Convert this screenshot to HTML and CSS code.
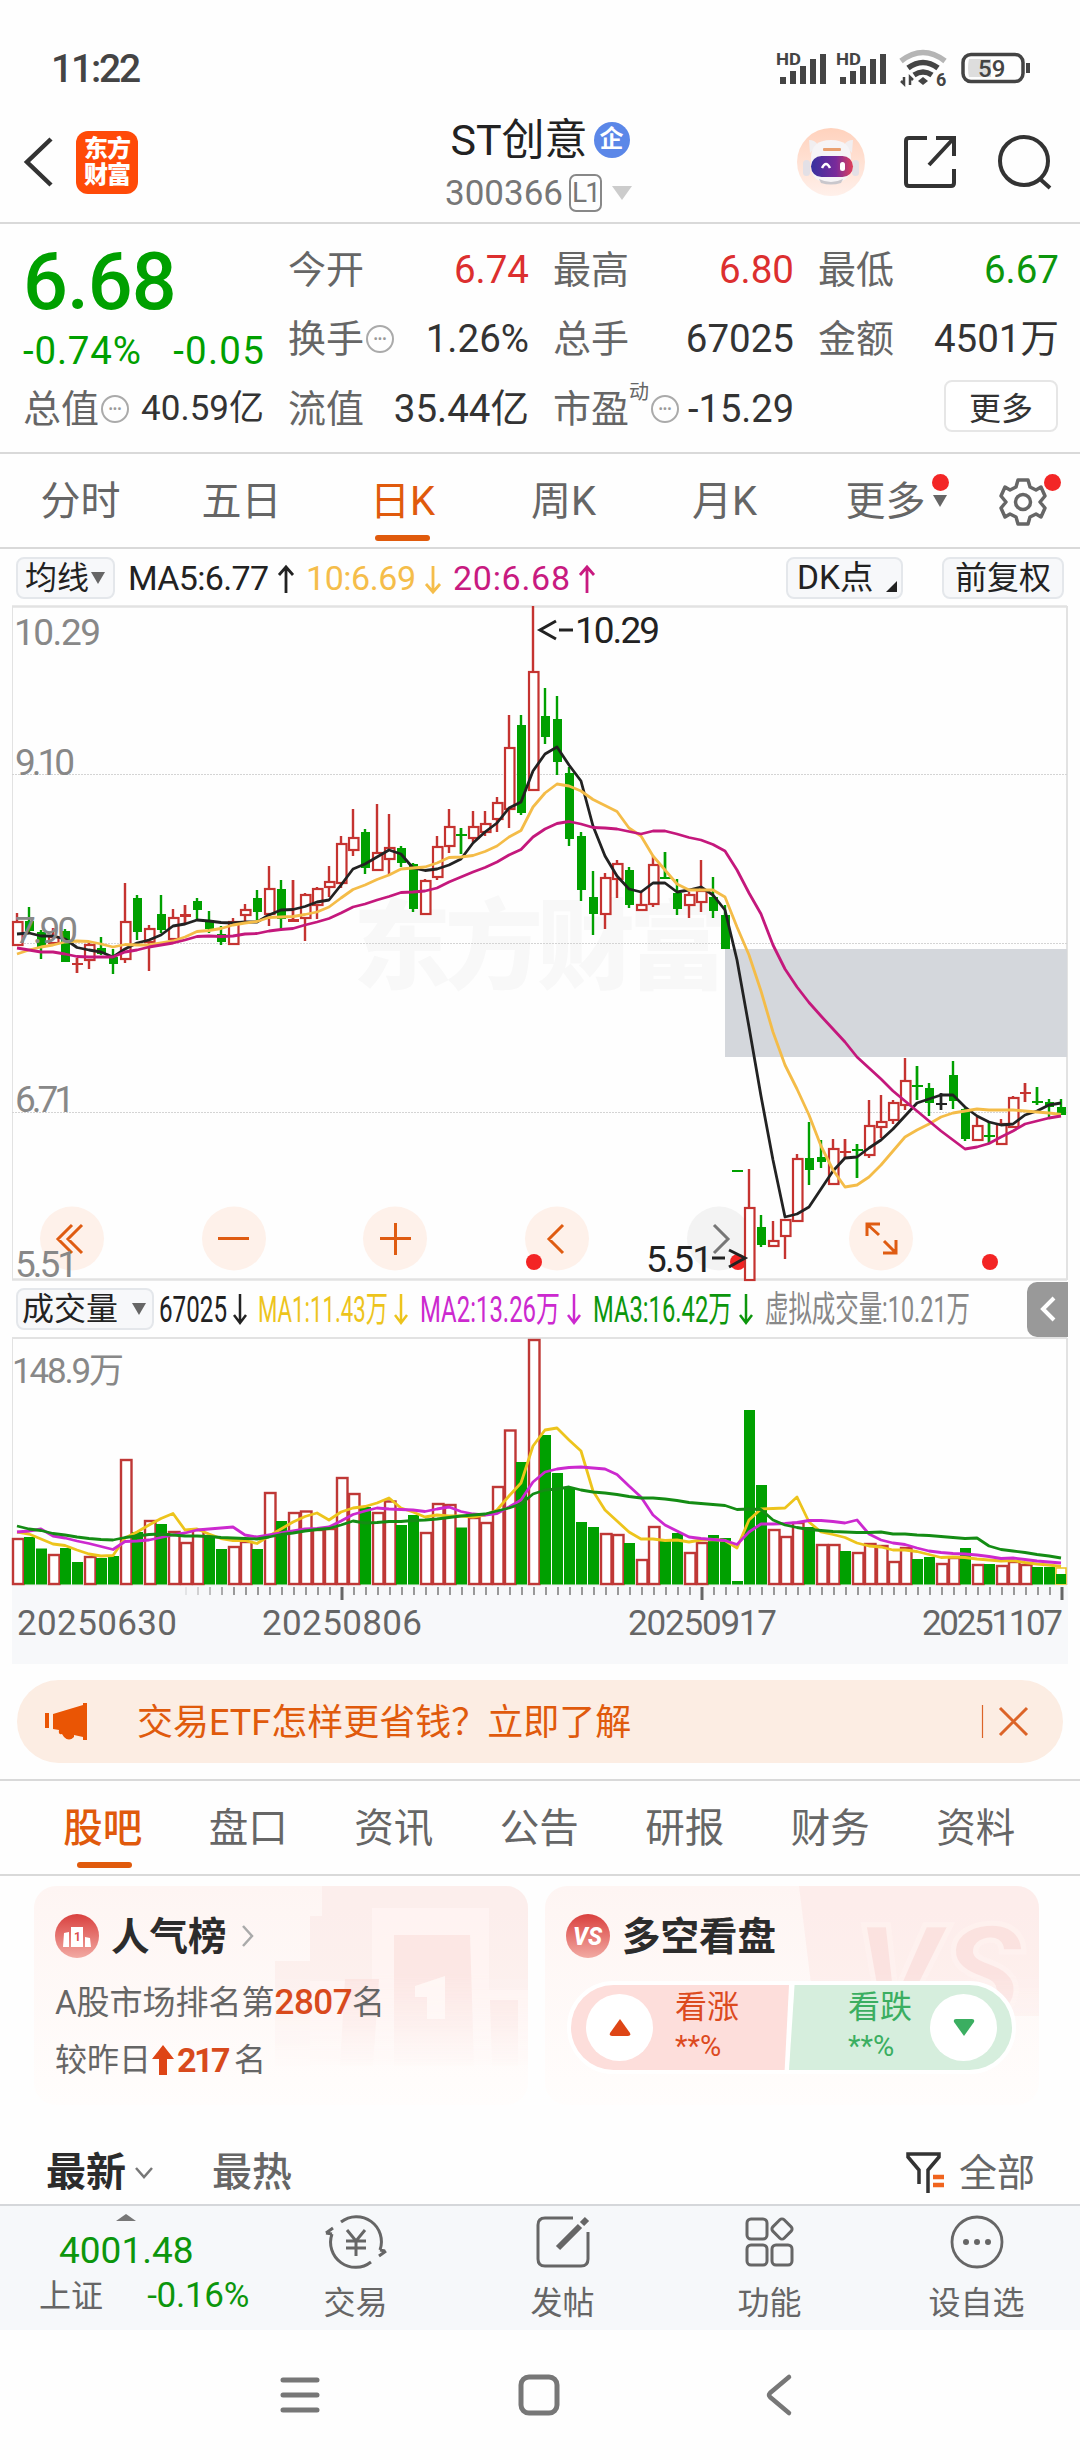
FILE: index.html
```html
<!DOCTYPE html>
<html lang="zh-CN">
<head>
    <meta charset="UTF-8">
    <meta name="viewport" content="width=device-width, initial-scale=1.0">
    <title>ST创意 300366</title>
    <link rel="stylesheet" href="styles.css">
</head>
<body>

    <div class="status-bar">
        <span class="time">11:22</span>
        <svg class="status-icons" width="256" height="44" viewBox="774 46 256 44">
            <g fill="#444">
                <text x="775" y="65" font-size="17" font-weight="700" textLength="25" lengthAdjust="spacingAndGlyphs">HD</text>
                <text x="835" y="65" font-size="17" font-weight="700" textLength="25" lengthAdjust="spacingAndGlyphs">HD</text>
                <path d="M779 77h6v7h-6zM789 71h6v13h-6zM799 66h6v18h-6zM809 59h6v25h-6zM819 54h6v30h-6z"/>
                <path d="M839 77h6v7h-6zM849 71h6v13h-6zM859 66h6v18h-6zM869 59h6v25h-6zM879 54h6v30h-6z"/>
                <text x="935" y="86" font-size="18" font-weight="700">6</text>
                <path d="M922 77l-5 4 5 4 5-4z"/>
            </g>
            <g fill="none" stroke="#444" stroke-width="5.500">
                <path d="M900 61Q922 44 944 61" stroke="#b5b5b5"/>
                <path d="M907 68Q922 57 937 68"/>
                <path d="M913 75Q922 69 931 75"/>
                <path d="M903 77v7l-3-3M909 85v-8l3 3" stroke-width="2.5"/>
                <rect x="962" y="54.500" width="60" height="27" rx="8" stroke-width="3.500"/>
                <path d="M1027 63v10" stroke-width="4"/>
            </g>
            <path d="M968 59h22v18h-22q-2-9 0-18" fill="#ddd"/>
            <text x="977" y="77" font-size="24" font-weight="500" fill="#444">59</text>
        </svg>
    </div>

    <div class="header">
        <div class="header-left">
            <svg width="30" height="50" viewBox="0 0 30 50"><path d="M27 2L3 25l24 23" fill="none" stroke="#333" stroke-width="4.500"/></svg>
            <div class="logo"><span>东方</span><span>财富</span></div>
        </div>
        <div class="header-title">
            <div class="name">ST创意<span class="badge">企</span></div>
            <div class="code">300366<span class="level">L1</span><i class="arrow-down"></i></div>
        </div>
        <div class="header-right">
            <svg class="robot" width="68" height="68" viewBox="0 0 68 68">
                <defs>
                    <linearGradient id="peach" x1="0" y1="0" x2="0" y2="1"><stop offset="0" stop-color="#ffd2bd"/><stop offset="1" stop-color="#fff0ea"/></linearGradient>
                    <linearGradient id="visor"><stop offset="0" stop-color="#38319f"/><stop offset=".6" stop-color="#7a2a9a"/><stop offset="1" stop-color="#e0405a"/></linearGradient>
                </defs>
                <circle cx="34" cy="34" r="34" fill="url(#peach)"/>
                <path d="M12 12q6 0 9 5l-8 8zM56 12q-6 0-9 5l8 8z" fill="#f1eef0"/>
                <path d="M14 30Q14 12 34 12t20 18v8q0 17-20 17T14 38z" fill="#f6f4f6"/>
                <rect x="6" y="32" width="7" height="16" rx="3.500" fill="#e3e0e6"/>
                <rect x="55" y="32" width="7" height="16" rx="3.500" fill="#e3e0e6"/>
                <path d="M22 51q12 6 24 0l-2 4q-10 3-20 0z" fill="#c9c7cc"/>
                <rect x="26" y="20" width="18" height="3" rx="1" fill="#e9a070"/>
                <rect x="14" y="28" width="42" height="21" rx="10.500" fill="url(#visor)"/>
                <path d="M25 40q4-8 8 0" fill="none" stroke="#fff" stroke-width="2.500"/>
                <rect x="43" y="34" width="5" height="9" rx="2.500" fill="#fff"/>
            </svg>
            <svg width="54" height="54" viewBox="0 0 54 54" fill="none" stroke="#333" stroke-width="4"><path d="M24 3H6q-3 0-3 3v42q0 3 3 3h42q3 0 3-3V34M33 3h18v18M51 3L26 30"/></svg>
            <svg width="56" height="56" viewBox="0 0 56 56" fill="none" stroke="#333" stroke-width="4"><circle cx="27" cy="27" r="24"/><path d="M43 45l10 9"/></svg>
        </div>
    </div>

    <div class="quote">
        <div class="price-box">
            <div class="price">6.68</div>
            <div class="change"><span>-0.74%</span><span>-0.05</span></div>
        </div>
        <div class="cell"><label>今开</label><b class="red">6.74</b></div>
        <div class="cell"><label>最高</label><b class="red">6.80</b></div>
        <div class="cell"><label>最低</label><b class="green">6.67</b></div>
        <div class="cell"><label>换手</label><i class="info">•••</i><b>1.26%</b></div>
        <div class="cell"><label>总手</label><b>67025</b></div>
        <div class="cell"><label>金额</label><b>4501万</b></div>
        <div class="cell small"><label>总值</label><i class="info">•••</i><b>40.59亿</b></div>
        <div class="cell"><label>流值</label><b>35.44亿</b></div>
        <div class="cell pe"><label>市盈</label><sup>动</sup><i class="info">•••</i><b>-15.29</b></div>
        <div class="cell"><button class="more-btn">更多</button></div>
    </div>

    <div class="period-tabs">
        <span>分时</span>
        <span>五日</span>
        <span class="active">日K</span>
        <span>周K</span>
        <span>月K</span>
        <span>更多<i class="caret"></i><i class="dot"></i></span>
        <div class="gear">
            <svg width="48" height="50" viewBox="-24 -25 48 50" fill="none" stroke="#666" stroke-width="3.500" stroke-linejoin="round">
                <path d="M-5-22H5L7-15 13-12 18-15 22-6 17 0 22 6 18 15 13 12 7 15 5 22H-5L-7 15-13 12-18 15-22 6-17 0-22-6-18-15-13-12-7-15Z"/>
                <circle r="7.500"/>
            </svg>
            <i class="dot"></i>
        </div>
    </div>

    <div class="ma-bar">
        <div class="chip ma-chip">均线<i class="caret"></i></div>
        <svg class="ma-values" width="480" height="44" viewBox="124 556 480 44">
            <g font-size="34">
                <text x="128" y="590" textLength="141" fill="#222">MA5:6.77</text>
                <text x="306" y="590" textLength="110" fill="#f5bd4a">10:6.69</text>
                <text x="453" y="590" textLength="117" fill="#c81a80">20:6.68</text>
            </g>
            <g fill="none" stroke-width="2.800">
                <path d="M286 593v-26M279 575l7-8 7 8" stroke="#222"/>
                <path d="M433 566v26M426 584l7 8 7-8" stroke="#f5bd4a"/>
                <path d="M587 593v-26M580 575l7-8 7 8" stroke="#c81a80"/>
            </g>
        </svg>
        <div class="chip dk-chip">DK点<i class="corner"></i></div>
        <div class="chip fq-chip">前复权</div>
    </div>

    <!-- K line -->
    <svg class="kline" width="1080" height="676" viewBox="0 605 1080 676">
        <g class="watermark"><text x="353" y="981" textLength="374">东方财富</text></g>
        <path class="frame" d="M12 606.500H1067M12 1279.500H1067" stroke-width="2.500"/>
        <path class="frame" d="M12.500 606V1280" stroke-width="1"/>
        <path class="frame" d="M1067 606V1280" stroke-width="2"/>
        <path class="grid" d="M12 774.500H1067M12 943.500H1067M12 1112.500H1067"/>
        <rect x="725" y="949" width="342" height="108" fill="#d4d7dc"/>
        <g class="tools">
            <circle cx="72" cy="1238.500" r="32"/>
            <circle cx="234" cy="1238.500" r="32"/>
            <circle cx="395" cy="1238.500" r="32"/>
            <circle cx="557" cy="1238.500" r="32"/>
            <circle cx="719" cy="1238.500" r="32"/>
            <circle cx="881" cy="1238.500" r="32"/>
            <path d="M72 1225L58 1239l14 14M82 1225l-14 14 14 14M218 1238.500h31M380 1238.500h31M395.500 1223v32M563 1225l-14 14 14 14M867 1236v-12h13M868 1225l11 10M884 1241l11 11M896 1240v13h-13"/>
            <path d="M714 1225l14 14-14 14"/>
        </g>
        <g class="events"><circle cx="534" cy="1262" r="8"/><circle cx="738" cy="1262" r="8"/><circle cx="990" cy="1262" r="8"/></g>
        <g id="candles"></g>
        <g class="axis">
            <text x="14" y="645" textLength="87">10.29</text>
            <text x="15" y="775" textLength="60">9.10</text>
            <text x="15" y="943" textLength="63">7.90</text>
            <text x="15" y="1112" textLength="60">6.71</text>
            <text x="15" y="1277" textLength="63">5.51</text>
        </g>
        <g class="peak">
            <text x="575" y="643" textLength="85">10.29</text>
            <text x="646" y="1272" textLength="67">5.51</text>
            <path d="M556 621l-16 9 16 9M559 630h14M712 1258h13M729 1250l16 8-16 9"/>
        </g>
    </svg>

    <div class="vol-bar">
        <div class="chip vol-chip">成交量<i class="caret"></i></div>
        <svg class="vol-values" width="820" height="44" viewBox="156 1288 820 44">
            <g font-size="36">
                <text x="159" y="1323" textLength="68" lengthAdjust="spacingAndGlyphs" fill="#222">67025</text>
                <text x="258" y="1323" textLength="130" lengthAdjust="spacingAndGlyphs" fill="#edc41c">MA1:11.43万</text>
                <text x="420" y="1323" textLength="140" lengthAdjust="spacingAndGlyphs" fill="#cc29cf">MA2:13.26万</text>
                <text x="593" y="1323" textLength="139" lengthAdjust="spacingAndGlyphs" fill="#0c960c">MA3:16.42万</text>
                <text x="765" y="1323" textLength="205" lengthAdjust="spacingAndGlyphs" fill="#888">虚拟成交量:10.21万</text>
            </g>
            <g fill="none" stroke-width="2.500">
                <path d="M240 1295v29M234 1316l6 8 6-8" stroke="#222"/>
                <path d="M401 1295v29M395 1316l6 8 6-8" stroke="#edc41c"/>
                <path d="M574 1295v29M568 1316l6 8 6-8" stroke="#cc29cf"/>
                <path d="M746 1295v29M740 1316l6 8 6-8" stroke="#0c960c"/>
            </g>
        </svg>
        <div class="collapse"><svg width="18" height="28" viewBox="0 0 18 28"><path d="M15 3L4 14l11 11" fill="none" stroke="#fff" stroke-width="4"/></svg></div>
    </div>

    <!-- volume -->
    <svg class="volume" width="1080" height="328" viewBox="0 1337 1080 328">
        <rect x="12" y="1586" width="1056" height="78" fill="#f7f8fa"/>
        <path class="frame" d="M12 1338H1067" stroke-width="2"/>
        <path class="frame" d="M12.500 1338V1585" stroke-width="1"/>
        <path class="frame" d="M1067 1338V1585" stroke-width="2"/>
        <path class="frame" d="M12 1585H1067" stroke-width="1"/>
        <g id="volumes"></g>
        <g id="ticks"></g>
        <g class="axis"><text class="vol-max" x="12" y="1383" textLength="112">148.9万</text></g>
        <g class="dates">
            <text x="17" y="1635" textLength="160">20250630</text>
            <text x="262" y="1635" textLength="160">20250806</text>
            <text x="628" y="1635" textLength="149">20250917</text>
            <text x="922" y="1635" textLength="141">20251107</text>
        </g>
    </svg>

    <div class="banner">
        <svg width="42" height="38" viewBox="0 0 42 38" fill="#ea5504"><path d="M0 10h4v15H0zM8 11L38 2V0h4v37h-4v-3l-9-2v2q-5 5-10 0l-2-3q-4 1-3-4l-6-1z"/></svg>
        <span>交易ETF怎样更省钱？立即了解</span>
        <svg class="close" width="48" height="34" viewBox="981 1705 48 34" fill="none" stroke="#dc6428"><path d="M982.500 1705v33" stroke-width="1.200"/><path d="M1000 1708l27 27M1027 1708l-27 27" stroke-width="3"/></svg>
    </div>

    <div class="info-tabs">
        <span class="active">股吧</span>
        <span>盘口</span>
        <span>资讯</span>
        <span>公告</span>
        <span>研报</span>
        <span>财务</span>
        <span>资料</span>
    </div>

    <div class="cards">
        <div class="card">
            <svg class="card-bg" width="494" height="219" viewBox="34 1886 494 219">
                <path d="M322 1886h206v180H275v-105h35v-45h12z" fill="#fbe4e2" opacity=".4"/>
                <path d="M372 1908h117v82h39v76H310v-85h62z" fill="#fff6f4" opacity=".65"/>
                <path d="M394 1935h76l4 131h-80zM345 1979h34l-6 87h-33zM490 2000h28v66h-26z" fill="#f9d9d6" opacity=".5"/>
                <path d="M415 1986l30-10v43h-18v-22h-12z" fill="#fff6f4"/>
            </svg>
            <div class="card-title">
                <svg width="44" height="44" viewBox="0 0 44 44">
                    <defs><linearGradient id="ruby" x1="0" y1="0" x2="0" y2="1"><stop offset="0" stop-color="#d9403e"/><stop offset="1" stop-color="#f2aaa3"/></linearGradient></defs>
                    <circle cx="22" cy="22" r="22" fill="url(#ruby)"/>
                    <path d="M9 19l5-1v15H8zM16 13h12v20H16zM30 23l5 1 1 9h-6z" fill="#fff"/>
                    <text x="19" y="27" font-size="12" font-weight="700" fill="#da504d">1</text>
                </svg>
                <h3>人气榜</h3>
                <svg width="14" height="22" viewBox="0 0 14 22"><path d="M2 1l9 10-9 10" fill="none" stroke="#aaa" stroke-width="2.500"/></svg>
            </div>
            <p>A股市场排名第<em>2807</em>名</p>
            <p class="rank-change">较昨日<svg width="24" height="32" viewBox="0 0 24 32"><path d="M12 1l11 14h-7v16H8V15H1z" fill="#de4516"/></svg><em class="bold">217</em>名</p>
        </div>
        <div class="card">
            <svg class="card-bg" width="494" height="219" viewBox="545 1886 494 219">
                <path d="M799 1886h240v130H815z" fill="#fce0de" opacity=".4"/>
                <text x="855" y="2017" font-size="130" font-weight="900" font-style="italic" fill="#f9d9d6" opacity=".55" stroke="#fff3f1" stroke-width="5" textLength="168" lengthAdjust="spacingAndGlyphs">VS</text>
            </svg>
            <div class="card-title">
                <svg width="44" height="44" viewBox="0 0 44 44">
                    <circle cx="22" cy="22" r="22" fill="url(#ruby)"/>
                    <text x="7" y="31" font-size="26" font-weight="800" font-style="italic" fill="#fff" textLength="29" lengthAdjust="spacingAndGlyphs">VS</text>
                </svg>
                <h3>多空看盘</h3>
            </div>
            <div class="vote">
                <div class="vote-up">
                    <i><svg width="22" height="17" viewBox="0 0 22 17"><path d="M11 0l10 14q1 3-2 3H3q-3 0-2-3z" fill="#de4516"/></svg></i>
                    <div><strong>看涨</strong><small>**%</small></div>
                </div>
                <div class="vote-down">
                    <div><strong>看跌</strong><small>**%</small></div>
                    <i><svg width="22" height="17" viewBox="0 0 22 17"><path d="M11 17L1 3Q0 0 3 0h16q3 0 2 3z" fill="#3bae61"/></svg></i>
                </div>
            </div>
        </div>
    </div>

    <div class="post-filter">
        <span class="newest">最新</span>
        <svg width="20" height="14" viewBox="0 0 20 14"><path d="M2 2l8 9 8-9" fill="none" stroke="#777" stroke-width="2.500"/></svg>
        <span class="hottest">最热</span>
        <svg class="funnel" width="40" height="42" viewBox="0 0 40 42" fill="none" stroke-width="3.500"><path d="M14 32V18L3 5V2h31v3L23 18v23" stroke="#333"/><path d="M28 25h11M28 33h11" stroke="#f0641e" stroke-width="4.500"/></svg>
        <span class="all">全部</span>
    </div>

    <div class="bottom-bar">
        <div class="index">
            <i class="arrow-up"></i>
            <div class="index-value">4001.48</div>
            <div class="index-row"><span>上证</span><span class="green">-0.16%</span></div>
        </div>
        <div class="nav-item">
            <svg width="60" height="54" viewBox="-30 -27 60 54" fill="none" stroke="#666" stroke-width="3">
                <path d="M-15-20A25 25 0 0 1 24 8M15 20A25 25 0 0 1-24-8M24 8l5 1M23 14l7-5M-24-8l-6-1M-23-14l-7 5"/>
                <path d="M-9-12L0-1 9-12M0-1v15M-10-1h20M-10 6h20"/>
            </svg>
            <span>交易</span>
        </div>
        <div class="nav-item">
            <svg width="54" height="54" viewBox="-27 -27 54 54" fill="none" stroke="#666" stroke-width="3">
                <path d="M10-24h-28q-7 0-7 7v34q0 7 7 7h36q7 0 7-7v-27"/>
                <path d="M-5 6L17-16" stroke-width="6"/><path d="M19-18l5-5" stroke-width="6"/>
            </svg>
            <span>发帖</span>
        </div>
        <div class="nav-item">
            <svg width="54" height="54" viewBox="-27 -27 54 54" fill="none" stroke="#666" stroke-width="3">
                <rect x="-23" y="-23" width="20" height="20" rx="4"/>
                <rect x="-23" y="3" width="20" height="20" rx="4"/>
                <rect x="2" y="3" width="20" height="20" rx="4"/>
                <rect x="4" y="-21" width="16" height="16" rx="3" transform="rotate(45 12 -13)"/>
            </svg>
            <span>功能</span>
        </div>
        <div class="nav-item">
            <svg width="54" height="54" viewBox="-27 -27 54 54">
                <circle r="25" fill="none" stroke="#666" stroke-width="2.800"/>
                <g fill="#666"><circle cx="-11" r="3"/><circle r="3"/><circle cx="11" r="3"/></g>
            </svg>
            <span>设自选</span>
        </div>
    </div>

    <div class="system-nav">
        <svg width="40" height="40" viewBox="0 0 40 40" stroke="#777" stroke-width="5" stroke-linecap="round"><path d="M3 5h34M3 20h34M3 35h34"/></svg>
        <svg width="42" height="42" viewBox="0 0 42 42"><rect x="3" y="3" width="36" height="36" rx="8" fill="none" stroke="#777" stroke-width="5"/></svg>
        <svg width="28" height="42" viewBox="0 0 28 42"><path d="M25 3L6 19q-2 2 0 4l19 16" fill="none" stroke="#777" stroke-width="4.500" stroke-linecap="round"/></svg>
    </div>

    <script src="chart.js"></script>
</body>
</html>
```

FILE: styles.css
```css
* {
    margin: 0;
    padding: 0;
    box-sizing: border-box;
}

body {
    width: 1080px;
    height: 2460px;
    overflow: hidden;
    background: #fefefe;
    color: #333;
    font-family: Roboto, 'Noto Sans CJK SC', sans-serif;
    line-height: 1;
}

i, em, sup {
    font-style: normal;
}

svg {
    display: block;
    flex: none;
    overflow: visible;
}

.red { color: #dc2f2f; }
.green { color: #0c960c; }

/* status bar */
.status-bar {
    display: flex;
    justify-content: space-between;
    align-items: center;
    height: 112px;
    padding: 24px 49px 0 51px;
}

.time {
    padding-top: 2px;
    font-size: 39px;
    font-weight: 500;
    letter-spacing: -2.2px;
    color: #444;
}

/* header */
.header {
    display: grid;
    grid-template-columns: 1fr auto 1fr;
    height: 112px;
    border-bottom: 2px solid #d9d9d9;
}

.header-left {
    display: flex;
    align-items: center;
    padding: 0 0 11px 24px;
    gap: 22px;
}

.logo {
    width: 62px;
    height: 63px;
    padding-top: 5px;
    border-radius: 12px;
    background: #ff4a08;
    color: #fff;
    font-size: 24px;
    font-weight: 900;
    line-height: 26px;
    text-align: center;
    letter-spacing: -1px;
}

.logo span {
    display: block;
}

.header-title {
    padding-top: 5px;
}

.name, .code {
    display: flex;
    align-items: center;
    justify-content: center;
}

.name {
    height: 46px;
    font-size: 43px;
    color: #222;
}

.badge {
    width: 36px;
    height: 36px;
    margin-left: 6px;
    border-radius: 50%;
    background: #5b87e8;
    color: #fff;
    font-size: 24px;
    font-weight: 700;
    line-height: 34px;
    text-align: center;
}

.code {
    height: 60px;
    font-size: 35px;
    color: #777;
}

.level {
    width: 33px;
    height: 38px;
    margin: 0 10px 0 6px;
    border: 2px solid #888;
    border-radius: 7px;
    font-size: 28px;
    line-height: 34px;
    text-align: center;
    letter-spacing: -2px;
}

.arrow-down {
    margin-right: 3px;
    border: 10px solid transparent;
    border-top: 14px solid #ccc;
    border-bottom: 0;
}

.header-right {
    display: flex;
    align-items: center;
    justify-content: flex-end;
    padding: 0 27px 12px 0;
}

.robot {
    margin-right: 38px;
}

.header-right svg:nth-child(2) {
    margin-right: 40px;
}

/* quote */
.quote {
    display: grid;
    grid-template-columns: repeat(4, 239px);
    grid-template-rows: repeat(3, 69.5px);
    column-gap: 26px;
    height: 230px;
    padding: 11px 0 0 23px;
    border-bottom: 2px solid #d9d9d9;
}

.price-box {
    grid-row: span 2;
    color: #00a000;
}

.price {
    height: 92px;
    font-size: 79px;
    font-weight: 500;
    line-height: 95px;
    letter-spacing: -1px;
}

.change {
    display: flex;
    justify-content: space-between;
    font-size: 38.500px;
    line-height: 47px;
    letter-spacing: 0.8px;
}

.change span:last-child {
    margin-right: -3px;
    letter-spacing: 1.2px;
}

.cell {
    display: flex;
    align-items: center;
    font-size: 38.500px;
}

.cell label {
    color: #666;
    font-size: 38px;
}

.cell b {
    margin: 0 -2px 0 auto;
    font-weight: 400;
}

.cell.small b {
    font-size: 35px;
}

.info {
    width: 28px;
    height: 28px;
    margin-left: 2px;
    border: 2px solid #aaa;
    border-radius: 50%;
    color: #999;
    font-size: 13px;
    line-height: 23px;
    text-align: center;
    letter-spacing: 0;
}

.pe sup {
    align-self: flex-start;
    padding-top: 8px;
    font-size: 20px;
    color: #666;
}

.pe b {
    font-size: 38px;
}

.more-btn {
    width: 114px;
    height: 52px;
    margin: 0 -1px 5px auto;
    border: 2px solid #e6e6e6;
    border-radius: 8px;
    background: #fff;
    color: #333;
    font: 32px Roboto, 'Noto Sans CJK SC', sans-serif;
}

/* period tabs */
.period-tabs {
    display: flex;
    height: 95px;
    border-bottom: 2px solid #d9d9d9;
}

.period-tabs span {
    position: relative;
    width: 161px;
    color: #666;
    font-size: 40px;
    line-height: 96px;
    text-align: center;
}

.period-tabs .active, .info-tabs .active {
    color: #e05a0c;
}

.period-tabs .active::after, .info-tabs .active::after {
    content: '';
    position: absolute;
    left: 53px;
    bottom: 6px;
    width: 55px;
    height: 6px;
    border-radius: 3px;
    background: #e05a0c;
}

.caret {
    display: inline-block;
    border: 7px solid transparent;
    border-top: 12px solid #666;
    border-bottom: 0;
}

.period-tabs .caret {
    position: absolute;
    left: 128px;
    top: 41px;
}

.dot {
    position: absolute;
    width: 17px;
    height: 17px;
    border-radius: 50%;
    background: #f32626;
}

.period-tabs span .dot {
    left: 127px;
    top: 20px;
}

.gear {
    position: relative;
    width: 114px;
    padding: 23px 0 0 33px;
}

.gear .dot {
    left: 78px;
    top: 20px;
}

/* indicator bars */
.ma-bar {
    display: flex;
    align-items: center;
    height: 56px;
    padding: 1px 16px 0;
}

.chip {
    display: flex;
    align-items: center;
    height: 42px;
    border: 2px solid #e4e7eb;
    border-radius: 8px;
    background: #f7f8fa;
    color: #222;
    font-size: 32px;
    white-space: nowrap;
}

.ma-chip {
    width: 99px;
    padding-left: 7px;
    gap: 2px;
}

.ma-values {
    margin-left: 9px;
}

.dk-chip {
    position: relative;
    width: 117px;
    margin-left: auto;
    padding-left: 9px;
    font-size: 33.500px;
}

.corner {
    position: absolute;
    right: 4px;
    bottom: 5px;
    border-left: 11px solid transparent;
    border-bottom: 11px solid #222;
}

.fq-chip {
    width: 122px;
    margin-left: 39px;
    padding-left: 11px;
}

.vol-bar {
    display: flex;
    align-items: center;
    height: 56px;
    padding-left: 16px;
}

.vol-chip {
    width: 138px;
    padding-left: 4px;
    gap: 14px;
}

.vol-values {
    margin-left: 2px;
}

.collapse {
    width: 41px;
    height: 55px;
    margin: 0 12px 0 auto;
    padding: 13px 0 0 12px;
    border-radius: 10px 0 0 10px;
    background: #999;
}

/* charts */
.frame {
    stroke: #e2e2e2;
}

.grid {
    stroke: #d4d4d4;
    stroke-width: 1;
    stroke-dasharray: 2 1;
}

.watermark text {
    fill: #f8f8f8;
    font-size: 98px;
    font-weight: 900;
}

.tools circle {
    fill: #fef1ea;
}

.tools circle:nth-child(5) {
    fill: #f3f3f3;
}

.tools path {
    fill: none;
    stroke: #df5c12;
    stroke-width: 3;
}

.tools path:last-child {
    stroke: #777;
}

.events {
    fill: #f32424;
}

.axis {
    fill: #888;
    font-size: 37px;
}

.axis .vol-max {
    font-size: 35px;
}

.dates {
    fill: #666;
    font-size: 35px;
}

.peak {
    fill: #222;
    font-size: 37px;
}

.peak path {
    fill: none;
    stroke: #222;
    stroke-width: 3;
}

/* banner */
.banner {
    display: flex;
    align-items: center;
    width: 1046px;
    height: 83px;
    margin: 15px 0 16px 17px;
    padding: 0 34px 0 28px;
    border-radius: 42px;
    background: #fcede3;
    color: #e05a0c;
    font-size: 36px;
}

.banner span {
    margin: 2px 0 0 50px;
}

.banner .close {
    margin-left: auto;
}

/* info tabs */
.info-tabs {
    display: flex;
    height: 97px;
    padding-left: 30px;
    border-top: 2px solid #d9d9d9;
    border-bottom: 2px solid #d9d9d9;
}

.info-tabs span {
    position: relative;
    width: 145.5px;
    color: #666;
    font-size: 39.500px;
    line-height: 95px;
    text-align: center;
}

.info-tabs .active {
    font-weight: 500;
}

.info-tabs .active::after {
    left: 47px;
}

/* cards */
.cards {
    display: flex;
    gap: 17px;
    padding: 10px 0 0 34px;
}

.card {
    position: relative;
    width: 494px;
    height: 219px;
    padding: 28px 21px 0;
    border-radius: 22px;
    overflow: hidden;
    background: linear-gradient(#fef5f3, #fffdfc);
}

.card-bg {
    position: absolute;
    left: 0;
    top: 0;
    -webkit-mask-image: linear-gradient(#000 40%, transparent 85%);
    mask-image: linear-gradient(#000 40%, transparent 85%);
}

.card-title {
    position: relative;
    display: flex;
    align-items: center;
    height: 44px;
}

.card-title h3 {
    margin: 2px 14px 0 12px;
    color: #2c2c2c;
    font-size: 38.500px;
    font-weight: 700;
}

.card p {
    position: relative;
    display: flex;
    align-items: center;
    height: 57px;
    font-size: 33px;
    color: #666;
}

.card-title + p {
    margin-top: 16px;
}

.card em {
    color: #d84a1c;
    font-size: 35px;
    font-weight: 500;
    letter-spacing: -0.5px;
}

.card p .bold {
    margin-right: 6px;
    font-weight: 700;
    font-size: 34px;
    letter-spacing: -2.500px;
}

.rank-change svg {
    margin: 0 2px 0 0;
}

.card .rank-change {
    font-size: 32px;
}

.vote {
    position: relative;
    display: flex;
    width: 449px;
    height: 93px;
    margin: 23px 0 0 1px;
    border: 4px solid #fff;
    border-radius: 47px;
    overflow: hidden;
    background: #fff;
}

.vote-up, .vote-down {
    display: flex;
    align-items: center;
    width: 219px;
    height: 85px;
}

.vote-up {
    padding-left: 15px;
    gap: 22px;
    background: #fddedb;
    color: #dc4a1e;
    clip-path: polygon(0 0, 100% 0, 98% 100%, 0 100%);
}

.vote-down {
    justify-content: flex-end;
    width: 224px;
    padding-right: 15px;
    gap: 18px;
    background: #d6eedd;
    color: #3bae61;
    clip-path: polygon(2.500% 0, 100% 0, 100% 100%, 0 100%);
}

.vote i {
    display: flex;
    align-items: center;
    justify-content: center;
    width: 67px;
    height: 67px;
    border-radius: 50%;
    background: #fff;
}

.vote strong, .vote small {
    display: block;
    font-weight: 400;
}

.vote strong {
    margin-top: -7px;
    font-size: 32px;
    line-height: 44px;
}

.vote small {
    font-size: 29px;
    line-height: 34px;
}

/* post filter */
.post-filter {
    display: flex;
    align-items: center;
    height: 99px;
    padding: 36px 45px 0 46px;
    font-size: 40px;
    color: #666;
}

.newest {
    margin-right: 8px;
    color: #2c2c2c;
    font-weight: 700;
}

.hottest {
    margin-left: 58px;
    font-weight: 500;
}

.funnel {
    margin: 0 14px 0 auto;
}

.all {
    font-size: 38px;
}

/* bottom bar */
.bottom-bar {
    display: flex;
    height: 126px;
    border-top: 2px solid #d5d7da;
    background: #f6f8fa;
    color: #666;
}

.index {
    width: 252px;
    padding: 8px 0 0 39px;
}

.arrow-up {
    display: block;
    width: 0;
    margin-left: 77px;
    border: 10px solid transparent;
    border-bottom: 7px solid #777;
    border-top: 0;
}

.index-value {
    margin: 8px 0 0 20px;
    color: #0c960c;
    font-size: 37px;
    line-height: 44px;
}

.index-row {
    display: flex;
    justify-content: space-between;
    padding-right: 3px;
    font-size: 32px;
    line-height: 46px;
}

.index-row .green {
    font-size: 35px;
    letter-spacing: -0.3px;
}

.nav-item {
    display: flex;
    flex-direction: column;
    align-items: center;
    width: 207px;
    padding-top: 9px;
    gap: 18px;
    font-size: 32px;
}

/* system navigation */
.system-nav {
    display: flex;
    align-items: center;
    height: 130px;
    padding-left: 280px;
    gap: 198px;
}

.system-nav svg:last-child {
    margin-left: 6px;
}
```

FILE: chart.js
```js
// one row per day: colour, high, body top, body bottom, low
const candles = [
    ['r',313,321,345,345],['g',307,321,331,332],['g',330,332,347,359],['r',328,336,343,343],
    ['g',329,331,362,362],['r',358,363,365,373],['r',342,344,360,369],['g',337,348,354,355],
    ['g',349,357,364,374],['r',283,321,359,363],['g',295,298,332,340],['r',325,328,342,371],
    ['g',295,314,330,333],['r',309,317,339,341],['r',305,314,317,323],['g',298,301,310,320],
    ['g',311,320,329,333],['g',326,334,342,345],['r',318,321,344,344],['r',304,309,315,322],
    ['g',290,298,312,322],['r',266,288,314,326],['g',280,289,319,329],['r',280,319,322,322],
    ['r',293,294,318,341],['r',287,288,305,319],['r',266,281,287,297],['r',236,243,283,288],
    ['r',209,237,250,256],['g',229,232,268,274],['r',204,252,270,270],['r',214,247,259,274],
    ['g',246,248,263,267],['g',263,264,309,312],['r',279,280,314,314],['r',236,246,277,280],
    ['r',209,226,246,253],['g',228,234,236,254],['r',211,226,238,242],['r',211,223,232,236],
    ['r',197,202,219,232],['r',115,147,209,228],['g',115,125,213,215],['r',6,71,190,190],
    ['g',88,116,137,144],['g',96,119,162,175],['g',167,173,239,246],['g',232,236,290,301],
    ['g',271,297,314,335],['r',273,277,314,329],['r',260,263,279,298],['g',267,270,305,308],
    ['r',291,304,310,310],['r',256,264,304,307],['g',252,277,278,279],['g',279,293,309,315],
    ['r',292,294,305,318],['r',260,290,302,312],['g',277,297,311,318],['g',305,315,349,349],
    ['g',570,570,571,571],['r',569,607,680,680],['g',615,627,645,647],['r',621,640,646,646],
    ['r',619,619,636,659],['r',554,558,621,621],['g',522,558,570,585],['g',540,557,562,568],
    ['r',539,548,584,584],['r',539,551,553,558],['g',544,549,551,578],['r',500,525,555,558],
    ['r',495,521,527,538],['r',500,502,520,524],['r',458,480,505,510],['g',466,485,487,500],
    ['g',483,488,503,516],['k',493,503,504,510],['g',461,475,501,509],['g',508,509,539,541],
    ['r',517,525,540,540],['g',522,535,536,543],['r',519,523,544,544],['r',496,497,527,527],
    ['r',483,492,493,502],['g',487,501,502,505],['g',499,502,507,517],['g',499,507,515,515]
];

const ma5 = [334,333,336,336,339,347.5,350,352,357,349,343,340,335,326,324,320,321,322.5,323,322,322,315,310,309.5,306.5,302,300,285,269,264,257,250,254,268,270.5,269,265,259,243,232,223,208,202,171,154,147,165,181,226,256,276,289,292,283,283,292,290,287,295,310,360,427,496,560,617,614,607,589,571,558,557,548,540,529,516,503,499,495,495,507,516,522,525,524,515,511,505,503];
const ma10 = [354,350,347,345,342,341,341.5,344,347,344.5,345,345,343,341,337,331.5,330.5,328.5,325,323,321.5,317.5,317,316.5,314.5,312,307,298,289.5,285,279.5,275,269,268,267,263,257.5,257,255.5,251.5,246,237,230.5,207,193,184,186,191,199.5,205.5,211.5,228,236,256,270,284,290,290,290,297,327,355,391,432,465,489,515,546,570,587,585,577,565,551,537,530,524,517,513,511,509,510,510,510,511,512,513,514.5];
const ma20 = [348,350,352,352,354,356.5,357,357,357,352,350,347,345,343,340,336.5,336,336.5,336,334,333.5,331,329.5,328.5,325,322,318.5,313,307,304,300,296.5,292.5,292,291,288,282,277,272,267.5,262,255,249.5,237,229,223.5,221.5,224,227.5,228,229,231.5,234,231,231,234,237.5,240,244.5,251,270,293,314,345,369,387,402.5,416,429,442,457,468,479,491,501,511,521,531,540,549,547,543.5,537,531,524,521,518,516];

const volColors = 'rggrggrggr' + 'grgrrrggrr' + 'grgrrrrrrg' + 'rrggrrrgrr' + 'rrgrgggggr' + 'rgrrggrrgg' + 'gggrrrgrrg' + 'rrrrrggrrg' + 'rgrrrggy';
const volTops = [208,207,218.5,224,218,232,226,228,226,129,202,190,194,201,212,199,207,219,216,211,219,162,191,182,180.5,199,198,147,163,177,182,170.5,195,185,202,173,174,197.5,187,192,156,99.5,132,9,105,143,158,192,197,203,204,213,229,196,209,203,222,212,205,208,251,80,155,199,206,192,197,214,214,221,222,213,215,231,217,229,227,233,227,218,234,234,235,231,234,237,237,238];
const vma1 = [202,204,209,214,215.5,220,224,226,225.5,208,202,195,188.5,183.5,200,199,204,208.5,210.5,210.5,213.5,206,199,192,186.5,183,190,182,178,176.5,173,168,178,182,187,185,186,186,187,185,180,166,153,116,100,98,110,121,161,180,191,202,209,209,210.5,210,212,210,209.5,210.5,218,190,179,178.5,178,167,192,202,204.5,207.5,213,216,217,220,220,221.5,224.5,227.5,227,227.5,229,230,231,230.5,232.5,234,235,236.5];
const vma2 = [202,201,199,206,208,211,213.5,216.5,219.5,211.5,211,210,207.5,205,203,200,199,198,197,205,207,205,203,201,199,198.5,197,191,184.5,181,178,179,179.5,180,181.5,179,177,181.5,184,185,183.5,177,170,152,142,139,137.5,137,138,139,144.5,156,167,185,195,201,207,208.5,209.5,210.5,214.5,202,194,194,193.5,192.5,190.5,190.5,191.5,193,190,204,210,213,214.5,218,221,222.5,223.5,224,225,226.5,228.5,228,229.5,231,232,233];
const vma3 = [196,199,200.5,203.5,205,207,208.5,209.5,210,207.5,206,204.5,204,205,206,206,206.5,207.5,208,208.5,209,207,204.5,203,201,199.5,198.5,195,191,193,192.5,191.5,191.5,190.5,190,189,187.5,186,185,184,181,178,174,164,160,159,157,160,162,163,164.5,166.5,168,168,169,170.5,172.5,173.5,174.5,175.5,179.5,179,179.5,190,195,197.5,199.5,200.5,201.5,202,202.5,202.5,202,204,204,205,205.5,206.5,207.5,208.5,208,216,219.5,221,222.5,224.5,226,228];

const colors = { r: '#c53330', g: '#00a000', k: '#222' };
const x = i => 17 + i * 12;

function line(data, offset, color) {
    const pts = data.map((v, i) => x(i) + ',' + (v + offset)).join(' ');
    return `<polyline points="${pts}" fill="none" stroke="${color}" stroke-width="2.8" stroke-linejoin="round"/>`;
}

function drawCandles() {
    let out = '';
    candles.forEach(([c, high, top, bottom, low], i) => {
        const cx = x(i), color = colors[c];
        high += 600; top += 600; bottom += 600; low += 600;
        out += `<path d="M${cx} ${high}V${top}M${cx} ${bottom}V${low}" stroke="${color}" stroke-width="2.4"/>`;
        if (bottom - top < 4) {
            const h = Math.max(bottom - top, 2);
            out += `<rect x="${cx - 5}" y="${top}" width="11" height="${h}" fill="${color}"/>`;
            if (high < top) out += `<path d="M${cx} ${high}V${low}" stroke="${color}" stroke-width="2.4"/>`;
        } else if (c === 'r') {
            out += `<rect x="${cx - 4}" y="${top + 1}" width="9.500" height="${bottom - top - 1}" fill="#fff" stroke="${color}" stroke-width="2.2"/>`;
        } else {
            out += `<rect x="${cx - 4}" y="${top}" width="9" height="${bottom - top}" fill="${color}"/>`;
        }
    });
    out += line(ma5, 600, '#222') + line(ma10, 600, '#f4bc48') + line(ma20, 600, '#c4187c');
    document.getElementById('candles').innerHTML = out;
}

function drawVolumes() {
    let out = '';
    volTops.forEach((v, i) => {
        const left = x(i) - 5, top = v + 1330, c = volColors[i];
        if (c === 'r') {
            out += `<rect x="${left + 1}" y="${top + 1}" width="10.500" height="${1583 - top}" fill="#fff" stroke="#bf3836" stroke-width="2.4"/>`;
        } else if (c === 'g') {
            out += `<rect x="${left}" y="${top}" width="11" height="${1584.5 - top}" fill="#00a000"/>`;
        } else {
            // today: estimated volume outline over the traded part
            out += `<rect x="${left}" y="${top}" width="10" height="${1584 - top}" fill="#fff" stroke="#edc41c" stroke-width="1.5"/>`;
            out += `<rect x="${left}" y="1574" width="10" height="10" fill="#00a000"/>`;
        }
    });
    out += line(vma1, 1330, '#edc41c') + line(vma2, 1330, '#cc29cf') + line(vma3, 1330, '#148c14');
    document.getElementById('volumes').innerHTML = out;
}

function drawTicks() {
    let out = '';
    for (let i = 14; i < 88; i++) {
        const major = i % 30 === 27;
        const fade = i < 18 ? (i - 13) / 5 : 1;
        out += `<path d="M${x(i) + 1} 1587v${major ? 13 : 8}" stroke="${major ? '#666' : '#999'}" stroke-width="${major ? 3 : 2}" opacity="${fade}"/>`;
    }
    document.getElementById('ticks').innerHTML = out;
}

drawCandles();
drawVolumes();
drawTicks();
```
